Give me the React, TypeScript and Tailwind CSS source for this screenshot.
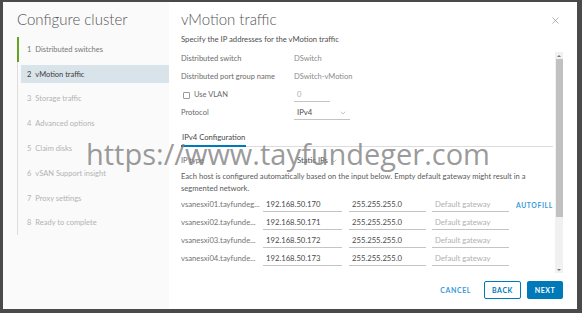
import { ChevronDown, X } from 'lucide-react';

const steps = [
  'Distributed switches',
  'vMotion traffic',
  'Storage traffic',
  'Advanced options',
  'Claim disks',
  'vSAN Support insight',
  'Proxy settings',
  'Ready to complete',
];

const hosts = [
  { name: 'vsanesxi01.tayfundeg...', ip: '192.168.50.170' },
  { name: 'vsanesxi02.tayfunde...', ip: '192.168.50.171' },
  { name: 'vsanesxi03.tayfunde...', ip: '192.168.50.172' },
  { name: 'vsanesxi04.tayfunde...', ip: '192.168.50.173' },
];

function StepRow({ index, label }: { index: number; label: string }) {
  // step 1 is done, step 2 is current, the rest are still ahead
  const done = index === 0;
  const current = index === 1;
  return (
    <div
      className={`h-[24.8px] flex items-center ${done ? '-ml-[1px] border-l-2 border-[#62a420]' : ''}`}
    >
      <div
        className={`flex-1 h-[18px] flex items-center pl-[6px] text-[7.5px] ${
          done ? 'ml-[2px] text-[#777777]' : 'ml-[3px]'
        } ${current ? 'bg-[#d9e3ea] text-[#3c3c3c]' : ''} ${!done && !current ? 'text-[#b3b3b3]' : ''}`}
      >
        <span className="mr-[4px]">{index + 1}</span>
        {label}
      </div>
    </div>
  );
}

function UnderlineBox({ width, text, muted }: { width: string; text: string; muted?: boolean }) {
  return (
    <div
      className={`${width} h-[14px] flex items-center pl-[3px] border-b border-[#c4c4c4] text-[7.7px] ${
        muted ? 'text-[#b0b0b0]' : 'text-[#4a4a4a]'
      }`}
    >
      {text}
    </div>
  );
}

export default function App() {
  return (
    <div className="relative w-[582px] h-[313px] overflow-hidden bg-[#4a4a4a] pt-[2px] pl-[3px] pr-[5px] pb-[4px] font-['Lato',sans-serif]">
      <div className="flex h-full bg-white">
        {/* wizard steps */}
        <aside className="w-[166px] bg-[#fafafa] flex flex-col">
          <h1 className="pt-[7px] pl-[14px] h-[27px] text-[15px] leading-[20px] font-light text-[#555555]">
            Configure cluster
          </h1>
          <div className="mt-[8px] ml-[14px] border-l border-[#dddddd]">
            {steps.map((s, i) => (
              <StepRow key={s} index={i} label={s} />
            ))}
          </div>
        </aside>

        {/* page */}
        <main className="flex-1 flex flex-col pl-[12px]">
          <div className="pt-[7px] h-[27px] flex justify-between pr-[16px]">
            <h2 className="text-[15px] leading-[20px] font-light text-[#555555]">vMotion traffic</h2>
            <X className="w-[11px] h-[11px] mt-[6px] text-[#8a8a8a]" strokeWidth={1.4} />
          </div>
          <p className="mt-[4px] h-[12px] text-[7.7px] leading-[12px] text-[#4f4f4f]">
            Specify the IP addresses for the vMotion traffic
          </p>

          <div className="mt-[5px] flex-1 min-h-0 flex pr-[14px]">
            <div className="flex-1 flex flex-col pr-[2px] text-[7.5px]">
              <div className="h-[18px] flex items-center">
                <span className="w-[113px] text-[#6a6a6a]">Distributed switch</span>
                <span className="text-[#8a8a8a]">DSwitch</span>
              </div>
              <div className="h-[18px] flex items-center">
                <span className="w-[113px] text-[#6a6a6a]">Distributed port group name</span>
                <span className="text-[#8a8a8a]">DSwitch-vMotion</span>
              </div>
              <div className="h-[18px] flex items-center">
                <span className="w-[113px] flex items-center text-[#6a6a6a]">
                  <span className="ml-[2px] mr-[4px] w-[7px] h-[7px] border border-[#9a9a9a] rounded-[1px] bg-white" />
                  Use VLAN
                </span>
                <UnderlineBox width="w-[36px]" text="0" muted />
              </div>
              <div className="h-[18px] flex items-center">
                <span className="w-[113px] text-[#6a6a6a]">Protocol</span>
                <div className="w-[56px] h-[14px] flex items-center justify-between pl-[3px] pr-[3px] border-b border-[#c4c4c4] text-[7.7px] text-[#4a4a4a]">
                  IPv4
                  <ChevronDown className="w-[8px] h-[8px] text-[#8a8a8a]" strokeWidth={1.5} />
                </div>
              </div>

              <div className="mt-[9px] flex border-b border-[#dddddd]">
                <div className="px-[1px] pb-[2px] -mb-[1px] border-b-2 border-[#0079b8] text-[7.7px] leading-[12px] text-[#4a4a4a]">
                  IPv4 Configuration
                </div>
              </div>

              <div className="mt-[5px] h-[18px] flex items-center">
                <span className="w-[113px] text-[#6a6a6a]">IP type</span>
                <span className="pl-[3px] flex items-center gap-[2px] text-[7.7px] text-[#4a4a4a]">
                  Static IPs
                  <ChevronDown className="w-[8px] h-[8px] text-[#8a8a8a]" strokeWidth={1.5} />
                </span>
              </div>
              <p className="text-[7.6px] leading-[12px] text-[#5a5a5a]">
                Each host is configured automatically based on the input below. Empty default gateway might result in a segmented network.
              </p>

              <div className="mt-[2px] flex flex-col">
                {hosts.map((h, i) => (
                  <div key={h.name} className="h-[18px] flex items-center">
                    <span className="w-[82px] text-[7.7px] text-[#747474] whitespace-nowrap">{h.name}</span>
                    <UnderlineBox width="w-[79px]" text={h.ip} />
                    <div className="w-[7px]" />
                    <UnderlineBox width="w-[77px]" text="255.255.255.0" />
                    <div className="w-[6px]" />
                    <UnderlineBox width="w-[77px]" text="Default gateway" muted />
                    {i === 0 && (
                      <span className="ml-[7px] text-[6.8px] font-bold tracking-[0.6px] text-[#3a9ad9]">AUTOFILL</span>
                    )}
                  </div>
                ))}
              </div>
            </div>

            {/* scrollbar */}
            <div className="mt-[2px] w-[8px] h-[221px] bg-[#f1f1f1] flex flex-col items-center">
              <div className="h-[7px] flex items-center">
                <span className="w-0 h-0 border-l-[2px] border-r-[2px] border-b-[2px] border-l-transparent border-r-transparent border-b-[#777777]" />
              </div>
              <div className="w-[7px] h-[158px] bg-[#c1c1c1]" />
              <div className="flex-1" />
              <div className="h-[7px] flex items-center">
                <span className="w-0 h-0 border-l-[2px] border-r-[2px] border-t-[2px] border-l-transparent border-r-transparent border-t-[#777777]" />
              </div>
            </div>
          </div>

          <div className="h-[36px] pt-[8px] pr-[14px] flex justify-end items-start gap-[6px] text-[7px] font-bold tracking-[0.6px]">
            <button className="h-[18px] mr-[7px] text-[#3a9ad9]">CANCEL</button>
            <button className="h-[18px] w-[37px] border border-[#0079b8] rounded-[2px] text-[#0079b8] bg-white">BACK</button>
            <button className="h-[18px] w-[36px] rounded-[2px] bg-[#0079b8] text-white">NEXT</button>
          </div>
        </main>
      </div>

      {/* watermark over the dialog */}
      <div className="absolute left-[86px] top-[139px] text-[29px] leading-none font-['Open_Sans',sans-serif] text-[#7f7f7f]/80 whitespace-nowrap pointer-events-none">
        https://www.tayfundeger.com
      </div>
    </div>
  );
}
